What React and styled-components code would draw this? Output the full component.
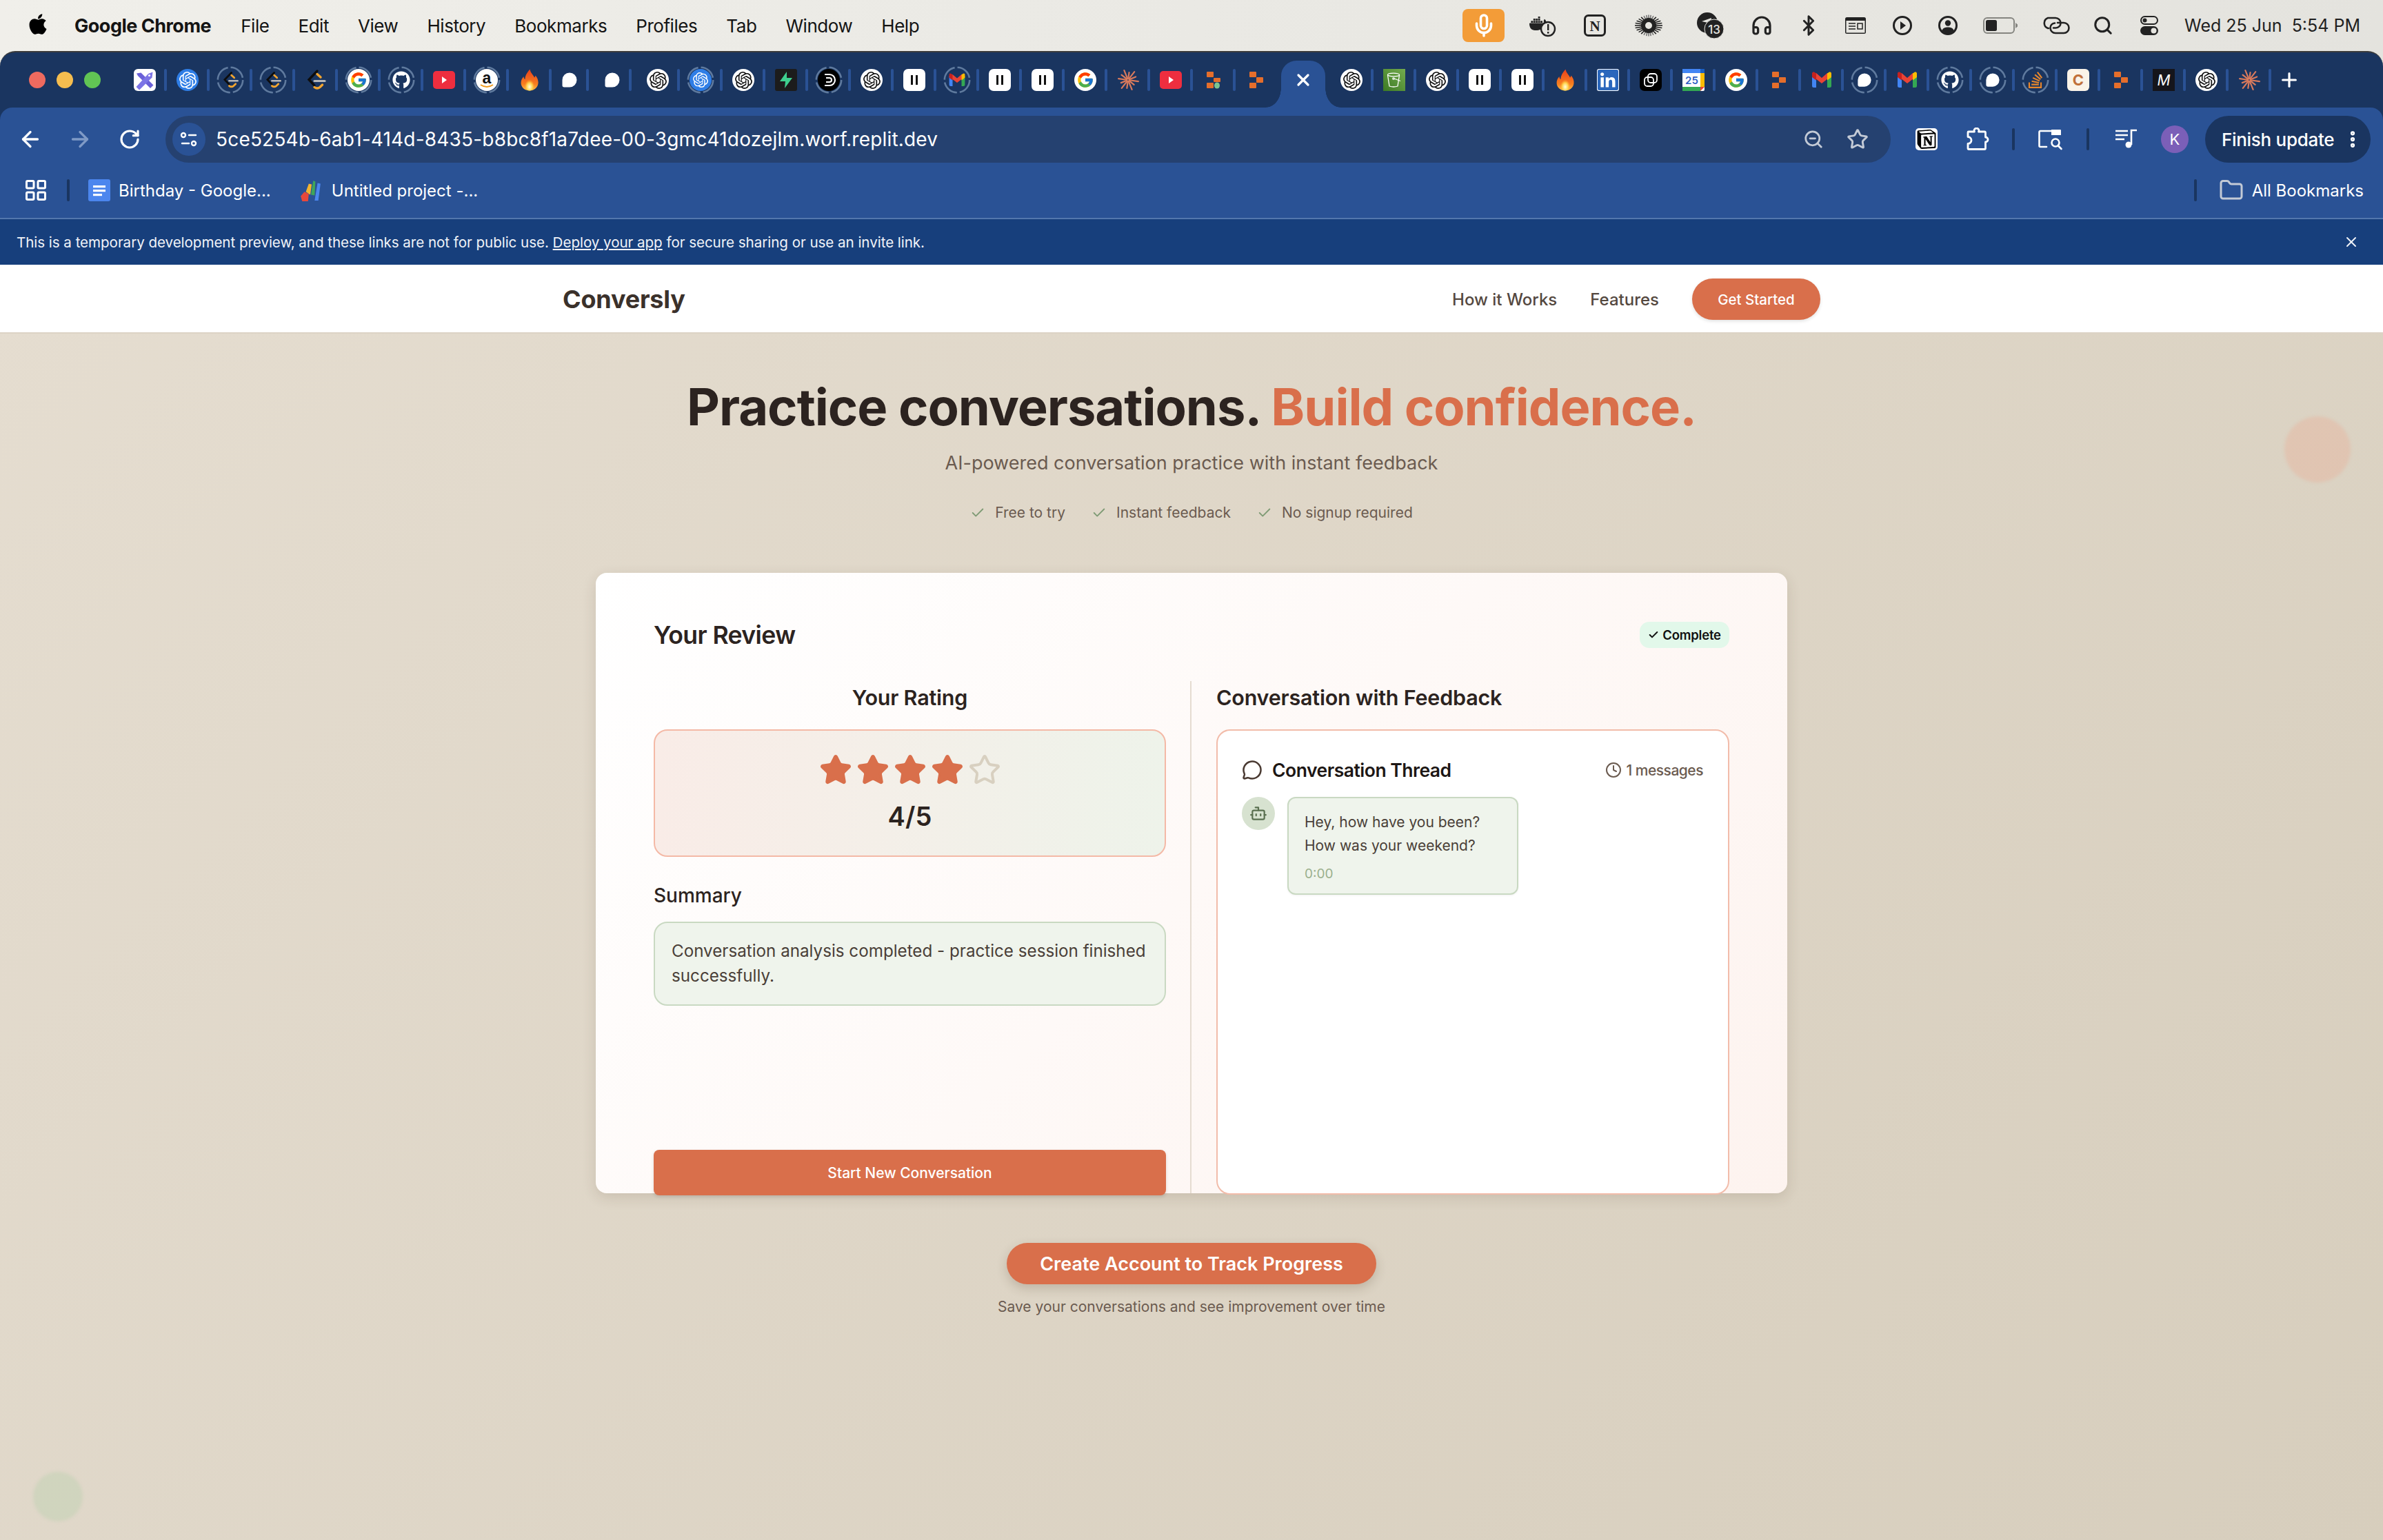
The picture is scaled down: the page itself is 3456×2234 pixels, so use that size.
import React from 'react';
import styled, { createGlobalStyle } from 'styled-components';
import { FaApple, FaGithub } from 'react-icons/fa';
import { FcGoogle } from 'react-icons/fc';
import { SiOpenai, SiLinkedin, SiStackoverflow, SiNotion, SiDocker } from 'react-icons/si';
import {
  ArrowLeft, ArrowRight, RotateCw, ZoomOut, Star, Folder, LayoutGrid, MessageCircle, Clock, Bot,
  Check, X, Plus, EllipsisVertical, Headphones, Bluetooth, Search, Mic,
} from 'lucide-react';

const Global = createGlobalStyle`
  html, body { margin: 0; padding: 0; height: 100%; background: #e9e8e3; }
  * { box-sizing: border-box; }
  body { font-family: Inter, "Liberation Sans", sans-serif; }
`;

const Screen = styled.div`
  width: 3456px; height: 2234px; display: flex; flex-direction: column; overflow: hidden;
  background: linear-gradient(90deg, #f0efea, #e4e3de);
`;

/* mac menu bar */
const MenuBar = styled.header`
  height: 74px; flex: none; display: flex; align-items: center; padding: 0 33px 0 38px; color: #141414;
`;
const AppleSlot = styled.span`display: flex; width: 70px; font-size: 34px; margin-top: -5px; color: #000;`;
const AppName = styled.span`font-size: 27px; font-weight: 700; letter-spacing: -0.5px; margin-right: 43px;`;
const MenuItem = styled.span`font-size: 26px; letter-spacing: -0.45px; margin-right: 42px;`;
const StatusGroup = styled.div`margin-left: auto; display: flex; align-items: center;`;
const StatusSlot = styled.span`
  width: ${p => p.$w}px; margin-left: ${p => p.$ml || 0}px; height: 48px; display: flex; align-items: center; justify-content: center; color: #222;
`;
const MicBox = styled.span`
  width: 61px; height: 48px; border-radius: 8px; background: #f39c38; color: #fff; display: flex; align-items: center; justify-content: center;
`;
const Clockline = styled.span`font-size: 25px; letter-spacing: 0; margin-left: 19px; color: #1f1f1f; white-space: pre;`;

/* browser window */
const Win = styled.div`
  flex: none; background: #1a3560; border-top: 2px solid #3c3c3c; border-radius: 22px 22px 0 0; overflow: hidden;
`;
const TabStrip = styled.div`height: 80px; display: flex; align-items: center; padding-left: 42px; position: relative;`;
const Lights = styled.div`display: flex; gap: 16px; width: 138px; flex: none;`;
const Light = styled.span`width: 24px; height: 24px; border-radius: 50%; background: ${p => p.$c};`;
const TabSlot = styled.div`
  flex: none; width: ${p => p.$last ? 58 : 62}px; height: 32px; display: flex; align-items: center; padding-left: 14px;
`;
const Fav = styled.span`
  width: 32px; height: 32px; flex: none; position: relative; display: flex; align-items: center; justify-content: center;
  border-radius: ${p => p.$r || 0}px; background: ${p => p.$bg || 'transparent'}; color: ${p => p.$c || '#fff'};
`;
const RingOverlay = styled.svg`position: absolute; left: -4px; top: -4px; width: 40px; height: 40px;`;
const TabSep = styled.span`width: 4px; height: 32px; border-radius: 2px; background: #2a5295; margin-left: 12px; flex: none;`;
const ActiveTab = styled.div`
  flex: none; align-self: flex-end; width: 64px; height: 68px; margin: 0 8px 0 8px; padding-bottom: 12px; background: #2a5295; color: #fff; border-radius: 22px 22px 0 0;
  display: flex; align-items: center; justify-content: center; position: relative;
  &::before, &::after { content: ''; position: absolute; bottom: 0; width: 22px; height: 28px; }
  &::before { left: -22px; background: radial-gradient(22px 28px at 0 0, transparent 98%, #2a5295 100%); }
  &::after { right: -22px; background: radial-gradient(22px 28px at 100% 0, transparent 98%, #2a5295 100%); }
`;
const NewTab = styled.span`margin-left: 10px; display: flex; color: #fff; width: 32px; justify-content: center;`;
const FavLetter = styled.span`
  font-size: ${p => p.$s}px; font-weight: ${p => p.$w || 700}; font-style: ${p => p.$i ? 'italic' : 'normal'}; color: ${p => p.$c}; line-height: 1;
`;

const Toolbar = styled.div`background: #2a5295; border-radius: 18px 18px 0 0;`;
const NavRow = styled.div`height: 80px; padding: 12px 18px 0 8px; display: flex; align-items: flex-start;`;
const ToolBtn = styled.span`
  width: 72px; height: 68px; flex: none; margin-left: ${p => p.$ml || 0}px; display: flex; align-items: center; justify-content: center;
  color: ${p => p.$c || '#fff'};
`;
const AddressPill = styled.div`
  flex: 1; height: 68px; margin-left: 16px; border-radius: 34px; background: #254170; display: flex; align-items: center; padding: 0 14px 0 10px; color: #fff;
`;
const SiteCtl = styled.span`width: 48px; height: 48px; border-radius: 50%; background: #2a5295; display: flex; align-items: center; justify-content: center; flex: none;`;
const UrlText = styled.span`font-size: 28px; margin-left: 15px; flex: 1; white-space: nowrap; letter-spacing: 0.19px;`;
const PillIcon = styled.span`width: 64px; display: flex; justify-content: center; color: #c3cad6; flex: none; margin-right: ${p => p.$mr || 0}px;`;
const VSep = styled.span`width: 4px; height: 32px; border-radius: 2px; background: #1a3560; flex: none; margin: 18px 0 0 ${p => p.$ml || 0}px;`;
const Avatar = styled.span`
  width: 40px; height: 40px; border-radius: 50%; background: #7b5fb8; color: #fff; font-size: 22px; display: flex; align-items: center; justify-content: center; margin: 14px 0 0 15px; flex: none;
`;
const FinishPill = styled.div`
  width: 240px; height: 68px; border-radius: 34px; background: #1a3560; color: #fff; margin-left: 24px; flex: none; display: flex; align-items: center; padding-left: 24px; font-size: 26px; font-weight: 500; gap: 12px; letter-spacing: -0.3px;
`;
const BookmarkRow = styled.div`height: 80px; display: flex; align-items: center; padding: 0 28px 0 34px; color: #fff; font-size: 24px;`;
const Bookmark = styled.span`display: flex; align-items: center; gap: ${p => p.$gap || 12}px; margin-left: ${p => p.$ml || 0}px;`;
const BookSep = styled.span`width: 4px; height: 32px; background: #1a3560; border-radius: 2px; margin-left: ${p => p.$auto ? 'auto' : `${p.$ml}px`};`;
const Rule = styled.div`height: 2px; background: #5377ad;`;
const Banner = styled.div`
  height: 66px; background: #173f7c; color: #f0f3f8; font-size: 20.6px; display: flex; align-items: center; justify-content: space-between; padding: 0 34px 0 24px; letter-spacing: -0.05px;
  a { color: inherit; text-decoration: underline; }
`;

/* page */
const Page = styled.div`
  flex: 1; position: relative; display: flex; flex-direction: column; overflow: hidden;
  background: linear-gradient(135deg, #e5ddd0, #d7cebd);
`;
const TopNav = styled.nav`
  height: 100px; flex: none; background: #fff; border-bottom: 2px solid #dcd3c5; display: flex; align-items: center; padding: 2px 816px 0; color: #2c2320;
`;
const Logo = styled.span`font-size: 36px; font-weight: 700; letter-spacing: -0.2px; margin-right: auto; color: #3b312b;`;
const NavLink = styled.span`font-size: 24px; font-weight: 500; color: #54483f; margin-right: 48px;`;
const CtaSmall = styled.span`
  width: 186px; height: 60px; border-radius: 30px; background: #d96f4b; color: #fff; font-size: 20.5px; font-weight: 500; display: flex; align-items: center; justify-content: center; box-shadow: 0 2px 5px rgba(0,0,0,.12);
`;
const Main = styled.main`display: flex; flex-direction: column; align-items: center; padding-top: 62px; color: #2c2320;`;
const Headline = styled.h1`
  margin: 0; font-size: 74px; line-height: 88px; font-weight: 700; letter-spacing: -1px; color: #2c2320;
  span { color: #d96f4b; }
`;
const Sub = styled.p`margin: 18px 0 0; font-size: 27px; line-height: 40px; color: #6b5b50;`;
const Perks = styled.ul`margin: 37px 0 0; padding: 0; list-style: none; display: flex; gap: 38px; font-size: 21px; line-height: 30px; color: #6b5b50;`;
const Perk = styled.li`display: flex; align-items: center; gap: 14px; svg { color: #7f9b75; }`;
const Card = styled.section`
  width: 1728px; height: 900px; margin-top: 72px; border-radius: 16px; padding: 66px 84px 0 84px; display: flex; flex-direction: column;
  background: linear-gradient(135deg, #ffffff 0%, #fdf3ef 100%); box-shadow: 0 6px 20px rgba(70,50,30,.14);
`;
const CardHead = styled.div`height: 48px; display: flex; align-items: center; justify-content: space-between;`;
const CardTitle = styled.h2`margin: 0; font-size: 35.6px; font-weight: 600; letter-spacing: -0.6px;`;
const DoneBadge = styled.span`
  width: 130px; height: 38px; border-radius: 14px; background: #e2f8ea; color: #111; font-size: 18.5px; font-weight: 600; display: flex; align-items: center; justify-content: center; gap: 5px; letter-spacing: -0.2px;
`;
const Columns = styled.div`flex: 1; margin-top: 43px; display: grid; grid-template-columns: 780px 1fr; min-height: 0;`;
const LeftCol = styled.div`display: flex; flex-direction: column; padding-right: 35px; border-right: 2px solid #e5dcd1;`;
const RightCol = styled.div`display: flex; flex-direction: column; padding-left: 36px;`;
const ColTitle = styled.h3`
  margin: 0; height: 48px; line-height: 48px; font-size: 30.5px; font-weight: 600; letter-spacing: -0.2px; text-align: ${p => p.$center ? 'center' : 'left'};
`;
const RatingBox = styled.div`
  margin-top: 22px; height: 185px; border-radius: 20px; border: 2px solid #f4b9a6; background: linear-gradient(90deg, #f9ece7, #eef3ea); display: flex; flex-direction: column; align-items: center; padding-top: 33px;
`;
const Stars = styled.div`display: flex; gap: 6px; height: 48px; svg { display: block; }`;
const Score = styled.div`margin-top: 20px; font-size: 38px; font-weight: 600; line-height: 46px; letter-spacing: 0.2px;`;
const SummaryLabel = styled.div`margin-top: 38px; font-size: 28px; font-weight: 500; line-height: 36px;`;
const SummaryBox = styled.div`
  margin-top: 20px; height: 122px; border-radius: 20px; border: 2px solid #c9d9c2; background: #eff4ec; padding: 23px 24px; font-size: 24.2px; line-height: 36px; color: #4a3f38;
`;
const BigAction = styled.div`
  margin-top: auto; margin-bottom: -3px; height: 66px; flex: none; border-radius: 8px; background: #d96f4b; color: #fff; font-size: 21px; font-weight: 500; display: flex; align-items: center; justify-content: center; box-shadow: 0 2px 5px rgba(0,0,0,.12); position: relative;
`;
const Thread = styled.div`
  margin-top: 22px; flex: 1; margin-bottom: -2px; background: #fff; border: 2px solid #f2bcaa; border-radius: 20px; padding: 38px 36px 0 35px;
`;
const ThreadHead = styled.div`height: 38px; display: flex; align-items: center; justify-content: space-between;`;
const ThreadTitle = styled.span`display: flex; align-items: center; gap: 14px; font-size: 26.5px; font-weight: 600; color: #1d1715; letter-spacing: -0.5px; svg { color: #4a3a32; }`;
const ThreadMeta = styled.span`display: flex; align-items: center; gap: 6px; font-size: 21px; font-weight: 500; color: #6b5b50; letter-spacing: -0.5px;`;
const Message = styled.div`margin-top: 20px; display: flex; gap: 18px; align-items: flex-start;`;
const BotAvatar = styled.span`width: 48px; height: 48px; border-radius: 50%; background: #d7e2d0; color: #5a7050; display: flex; align-items: center; justify-content: center; flex: none;`;
const Bubble = styled.div`
  width: 335px; height: 142px; background: #eff4ec; border: 2px solid #c9d9c2; border-radius: 12px; padding: 18px 22px 0 23px; font-size: 21px; line-height: 34px; color: #4a3f38; box-shadow: 0 1px 3px rgba(0,0,0,.06);
`;
const BubbleTime = styled.div`margin-top: 11px; font-size: 19px; line-height: 26px; color: #9bb08e;`;
const CtaBig = styled.div`
  margin-top: 72px; width: 536px; height: 60px; border-radius: 30px; background: #d96f4b; color: #fff; font-size: 27px; font-weight: 600; display: flex; align-items: center; justify-content: center; box-shadow: 0 6px 16px rgba(70,50,30,.2);
`;
const CtaNote = styled.p`margin: 18px 0 0; font-size: 21px; line-height: 30px; color: #6b5b50;`;
const Blob = styled.span`
  position: absolute; border-radius: 50%; width: ${p => p.$d}px; height: ${p => p.$d}px; background: ${p => p.$bg}; filter: blur(2px);
`;
const BlobTR = styled(Blob)`right: 47px; top: 220px;`;
const BlobBL = styled(Blob)`left: 48px; bottom: 27px;`;

/* ---------- favicon drawings ---------- */
const S = p => <svg width="32" height="32" viewBox="0 0 32 32" {...p} />;
const Ring = () => (
  <RingOverlay viewBox="0 0 40 40"><circle cx="20" cy="20" r="18.2" fill="none" stroke="#5f7a9e" strokeWidth="2.6" strokeDasharray="24.5 4.1" /></RingOverlay>
);
const Blocks = ({ dot }) => (
  <S>
    <rect x="6" y="4" width="10" height="8" rx="1" fill="#e56e2b" />
    <rect x="16" y={dot ? 13 : 12} width="10" height={dot ? 6 : 8} rx="1" fill="#e56e2b" />
    <rect x="6" y="20" width="10" height="8" rx="1" fill="#e56e2b" />
    {dot && <ellipse cx="21" cy="24" rx="4" ry="4.6" fill="#7cc48f" />}
  </S>
);
const Flame = () => (
  <S>
    <defs>
      <linearGradient id="fl" x1="0" y1="0" x2="0" y2="1"><stop offset="0" stopColor="#e8401c" /><stop offset=".7" stopColor="#f77f1f" /><stop offset="1" stopColor="#ffc04a" /></linearGradient>
      <radialGradient id="fi" cx=".5" cy=".72" r=".55"><stop offset="0" stopColor="#fffde0" /><stop offset=".55" stopColor="#ffd34d" /><stop offset="1" stopColor="#ff9a2a" stopOpacity="0" /></radialGradient>
    </defs>
    <path d="M16.5 0.5C17.5 6 21.5 8.5 23 12.5C24 11.5 24.5 10.5 24.5 9.5C27.5 13 29 17 28.5 21C27.8 27 22.5 31.5 16 31.5C9.5 31.5 4 27 3.6 21C3.3 17 5 13.5 7.5 11C7.5 13 8.3 14.5 9.5 15C9.3 10 12.5 5 16.5 .5Z" fill="url(#fl)" />
    <path d="M16 12C17 16 23 19 23 24.5C23 28.5 20 31.5 16 31.5C12 31.5 9 28.5 9 24.5C9 19 14.5 17 16 12Z" fill="url(#fi)" />
  </S>
);
const Burst = ({ size = 32, color = '#d97a5c', w = 2.2 }) => (
  <svg width={size} height={size} viewBox="0 0 32 32">
    {[15, 11, 15, 12, 15, 11, 14, 12, 15, 11, 15, 12].map((l, i) => {
      const a = (i * 30 + 8) * Math.PI / 180;
      return <line key={i} x1={16 + 2 * Math.cos(a)} y1={16 + 2 * Math.sin(a)} x2={16 + l * Math.cos(a)} y2={16 + l * Math.sin(a)} stroke={color} strokeWidth={w} strokeLinecap="round" />;
    })}
  </svg>
);
const Gmail = ({ size = 32 }) => (
  <svg width={size} height={size} viewBox="0 0 32 32">
    <path d="M2 10a3 3 0 0 1 3-3h3v20H4.5A2.5 2.5 0 0 1 2 24.5Z" fill="#4285f4" />
    <path d="M30 10a3 3 0 0 0-3-3h-3v20h3.5a2.5 2.5 0 0 0 2.5-2.5Z" fill="#34a853" />
    <path d="M2 10l14 11 14-11v-1l-6-3-8 7-8-7-6 3Z" fill="#ea4335" />
    <path d="M24 6.5l2.5-1.7A2.2 2.2 0 0 1 30 7v5l-6 4.5Z" fill="#fbbc04" />
    <path d="M8 6.5L5.5 4.8A2.2 2.2 0 0 0 2 7v5l6 4.5Z" fill="#c5221f" />
  </svg>
);
const Leet = ({ small }) => (
  <svg width={small ? 26 : 32} height={small ? 26 : 32} viewBox="0 0 32 32" fill="none" strokeLinecap="round">
    <path d="M18 3L6 15.5L14 24" stroke="#0d0d0d" strokeWidth="3.4" />
    <path d="M18 7.5L23 12" stroke="#f3a52f" strokeWidth="3.4" />
    <path d="M14 26.5q4 3 8 0l3.5-3.5" stroke="#f3a52f" strokeWidth="3.4" />
    <path d="M14 17.5H29" stroke="#b7b7b7" strokeWidth="3.2" />
  </svg>
);
const Kit = () => (
  <S>
    <path d="M4 6.5l6.5-1 18 18-4.5 4.5-18-18Z" fill="#6a60d8" />
    <path d="M27.5 4.5l-1 8L8 30.5l-4.5-4.5L21 7Z" fill="#7c74e6" />
    <circle cx="22.5" cy="9.5" r="1.6" fill="#fff" />
  </S>
);
const Chat = ({ size = 24 }) => (
  <svg width={size} height={size} viewBox="0 0 24 24"><path d="M12 1.5a10.5 10.5 0 0 1 0 21H4.2A2.7 2.7 0 0 1 1.5 19.8V12A10.5 10.5 0 0 1 12 1.5Z" fill="#fff" /></svg>
);
const YouTube = () => (
  <S><rect x="0" y="3" width="32" height="26" rx="5" fill="#ee2e3f" /><path d="M13 11l7 5-7 5Z" fill="#fff" /></S>
);
const Pause = () => (
  <Fav $bg="#fff" $r={7}>
    <S><rect x="11" y="9" width="3" height="14" fill="#111" /><rect x="18" y="9" width="3" height="14" fill="#111" /></S>
  </Fav>
);
const GptWhite = () => <Fav $bg="#fff" $r={16} $c="#111"><SiOpenai size={25} /></Fav>;
const GoogleFav = () => <Fav $bg="#fff" $r={16}><FcGoogle size={26} /></Fav>;
const GoogleRing = () => <Fav><Fav $bg="#fff" $r={16}><FcGoogle size={26} /></Fav><Ring /></Fav>;
const Bucket = () => (
  <Fav $bg="linear-gradient(45deg,#3c7a24,#74ab4e)">
    <S fill="none" stroke="#fff" strokeWidth="1.3"><ellipse cx="15" cy="8.5" rx="8.5" ry="2.3" /><path d="M6.5 9l2.5 16q6 2 12 0l2.5-16" /><circle cx="15" cy="14" r="1.2" /><path d="M16 14l9 3.5" /></S>
  </Fav>
);
const CopyBlack = () => (
  <Fav $bg="#000" $r={7}>
    <S fill="none" stroke="#fff" strokeWidth="1.8"><rect x="12" y="7" width="13" height="13" rx="4" /><rect x="7" y="12" width="13" height="13" rx="4" /></S>
  </Fav>
);
const Cal = () => (
  <Fav>
    <S>
      <rect width="32" height="32" rx="2" fill="#fff" />
      <rect width="26" height="6" fill="#4285f4" /><rect x="26" width="6" height="6" fill="#1a5fc4" />
      <rect x="26" y="6" width="6" height="20" fill="#fbbc04" />
      <rect y="26" width="26" height="6" fill="#34a853" /><path d="M26 26h6l-6 6Z" fill="#ea4335" />
      <text x="13.5" y="22" fontSize="15" fontWeight="600" textAnchor="middle" fill="#2d5fc4" fontFamily="Inter">25</text>
    </S>
  </Fav>
);
const Supa = () => (
  <Fav $bg="#1c1c1c" $r={3}><S><path d="M17 4L7 18h8l-1 10 11-15h-8Z" fill="#3ecf8e" /></S></Fav>
);
const DLogo = () => (
  <Fav $bg="#000" $r={16}>
    <S fill="none" stroke="#fff" strokeWidth="2.2"><path d="M10 8h7a8 8 0 0 1 0 16h-7" /><path d="M12 13h5a3 3 0 0 1 0 6h-5" /></S><Ring />
  </Fav>
);
const Amazon = () => (
  <Fav>
    <Fav $bg="#fff" $r={16}>
      <svg width="32" height="32" viewBox="0 0 32 32">
        <text x="16" y="21" fontSize="23" fontWeight="700" fill="#111" textAnchor="middle" fontFamily="Liberation Sans">a</text>
        <path d="M7 23q9 6 18 0" stroke="#f19a1a" strokeWidth="2" fill="none" />
      </svg>
    </Fav>
    <Ring />
  </Fav>
);
const KitFav = () => <Fav $bg="#fff" $r={6}><Kit /></Fav>;
const GptBlue = ({ ring }) => (
  <Fav>
    <Fav $bg="#2f7ee6" $r={16}><SiOpenai size={ring ? 22 : 25} color="#fff" /></Fav>
    {ring && <Ring />}
  </Fav>
);
const Ringed = ({ children }) => <Fav>{children}<Ring /></Fav>;

const tabsBefore = [
  <KitFav />, <GptBlue />, <Ringed><Leet small /></Ringed>, <Ringed><Leet small /></Ringed>, <Leet />, <GoogleRing />,
  <Ringed><FaGithub size={26} color="#fff" /></Ringed>, <YouTube />, <Amazon />, <Flame />, <Chat />, <Chat />, <GptWhite />,
  <GptBlue ring />, <GptWhite />, <Supa />, <DLogo />, <GptWhite />, <Pause />, <Ringed><Gmail size={26} /></Ringed>,
  <Pause />, <Pause />, <GoogleFav />, <Burst />, <YouTube />, <Blocks dot />, <Blocks />,
];
const tabsAfter = [
  <GptWhite />, <Bucket />, <GptWhite />, <Pause />, <Pause />, <Flame />, <Fav $bg="#fff" $r={3} $c="#2a66bc"><SiLinkedin size={30} /></Fav>,
  <CopyBlack />, <Cal />, <GoogleFav />, <Blocks />, <Gmail />, <Ringed><Chat size={22} /></Ringed>, <Gmail />,
  <Ringed><FaGithub size={26} color="#fff" /></Ringed>, <Ringed><Chat size={22} /></Ringed>, <Ringed><SiStackoverflow size={24} color="#e8862b" /></Ringed>,
  <Fav $bg="#faf3e8" $r={6}><FavLetter $s={22} $c="#c0703a">C</FavLetter></Fav>, <Blocks />,
  <Fav $bg="#15151b"><FavLetter $s={21} $w={400} $i $c="#fff">M</FavLetter></Fav>, <GptWhite />, <Burst />,
];

/* ---------- status icons ---------- */
const Ic = p => <svg fill="none" stroke="#222" strokeWidth="3" {...p} />;
const DockerAlert = () => (
  <svg width="40" height="34" viewBox="0 0 40 34">
    <foreignObject x="0" y="0" width="28" height="28"><SiDocker size={28} color="#222" /></foreignObject>
    <circle cx="27" cy="22" r="10" fill="#e6e5e0" stroke="#222" strokeWidth="2.4" />
    <rect x="26" y="15" width="2.4" height="9" fill="#222" /><rect x="26" y="26" width="2.4" height="2.6" fill="#222" />
  </svg>
);
const NotionMark = () => (
  <svg width="32" height="32" viewBox="0 0 32 32">
    <rect x="1.5" y="1.5" width="29" height="29" rx="5" fill="none" stroke="#222" strokeWidth="3" />
    <text x="16" y="24" fontSize="21" fontWeight="700" textAnchor="middle" fontFamily="Liberation Serif" fill="#222">N</text>
  </svg>
);
const Sun = () => (
  <svg width="40" height="32" viewBox="0 0 40 32">
    {Array.from({ length: 28 }).map((_, i) => {
      const a = i * (360 / 28) * Math.PI / 180;
      const h = Math.abs(Math.cos(a));
      return <line key={i} x1={20 + 9 * Math.cos(a)} y1={16 + 9 * Math.sin(a)} x2={20 + (13 + 7 * h) * Math.cos(a)} y2={16 + 15.5 * Math.sin(a)} stroke={h > .5 ? '#222' : '#777'} strokeWidth="1.6" />;
    })}
    <circle cx="20" cy="16" r="8" fill="none" stroke="#222" strokeWidth="6" />
  </svg>
);
const Badge13 = () => (
  <svg width="42" height="38" viewBox="0 0 42 38">
    <circle cx="16" cy="15" r="15" fill="#222" /><path d="M8 13l14-5-2 10-3-3Z" fill="#e6e5e0" />
    <circle cx="26" cy="24" r="14" fill="#222" stroke="#e6e5e0" strokeWidth="1" />
    <text x="26" y="30.5" fontSize="17" fontFamily="Inter" fontWeight="500" fill="#e6e5e0" textAnchor="middle">13</text>
  </svg>
);
const KeyWin = () => (
  <svg width="30" height="24" viewBox="0 0 30 24">
    <rect width="30" height="24" rx="2.5" fill="#222" /><rect x="1.5" y="5" width="27" height="17.5" fill="#e6e5e0" />
    <path d="M5 9h10M5 13h10M5 17h10" stroke="#222" strokeWidth="1.5" />
    <rect x="18" y="9" width="7" height="8" fill="none" stroke="#222" strokeWidth="1.5" />
  </svg>
);
const PlayRing = () => (
  <Ic width="28" height="28" viewBox="0 0 28 28"><circle cx="14" cy="14" r="12.5" /><path d="M11 8l8 6-8 6Z" fill="#222" stroke="none" /></Ic>
);
const UserRing = () => (
  <Ic width="28" height="28" viewBox="0 0 28 28">
    <circle cx="14" cy="14" r="12.5" /><circle cx="14" cy="10.5" r="4.2" fill="#222" stroke="none" />
    <path d="M5 22c2-5 5-5.5 9-5.5s7 .5 9 5.5q-9 7-18 0Z" fill="#222" stroke="none" />
  </Ic>
);
const Battery = () => (
  <svg width="50" height="24" viewBox="0 0 50 24">
    <rect x="1" y="1" width="44" height="22" rx="5" fill="none" stroke="#858580" strokeWidth="2" />
    <rect x="4" y="4" width="16" height="16" rx="2.5" fill="#222" />
    <path d="M47 8l3 2.5v3l-3 2.5Z" fill="#858580" />
  </svg>
);
const LinkMark = () => (
  <Ic width="42" height="26" viewBox="0 0 42 26" strokeWidth="2.6" strokeLinecap="round">
    <path d="M11 17h-1a8 8 0 0 1 0-15h11a7.5 7.5 0 0 1 7.5 7.5 7 7 0 0 1-7 7H18" />
    <path d="M24 9h9a7.5 7.5 0 0 1 0 15H21a7.5 7.5 0 0 1-7.5-7.5A7 7 0 0 1 20 9.5" />
  </Ic>
);
const Toggles = () => (
  <svg width="26" height="28" viewBox="0 0 26 28">
    <rect x="1" y="1" width="24" height="11" rx="5.5" fill="none" stroke="#222" strokeWidth="2" /><circle cx="6.5" cy="6.5" r="3" fill="#222" />
    <rect x="0" y="15" width="26" height="13" rx="6.5" fill="#222" /><circle cx="19.5" cy="21.5" r="4" fill="#e6e5e0" />
  </svg>
);
const statusItems = [
  { w: 72, ml: 20, el: <DockerAlert /> }, { w: 72, ml: 3, el: <NotionMark /> }, { w: 72, ml: 6, el: <Sun /> },
  { w: 72, ml: 18, el: <Badge13 /> }, { w: 72, ml: 2, el: <Headphones size={32} strokeWidth={2.4} /> },
  { w: 60, ml: 2, el: <Bluetooth size={32} strokeWidth={2.2} /> }, { w: 72, ml: 2, el: <KeyWin /> }, { w: 64, el: <PlayRing /> },
  { w: 64, ml: 2, el: <UserRing /> }, { w: 68, ml: 10, el: <Battery /> }, { w: 72, ml: 10, el: <LinkMark /> },
  { w: 64, ml: 1, el: <Search size={30} strokeWidth={2.4} /> }, { w: 64, ml: 3, el: <Toggles /> },
];

/* ---------- toolbar icons ---------- */
const TuneIcon = () => (
  <svg width="26" height="24" viewBox="0 0 26 24" fill="none" stroke="#fff" strokeWidth="2.4" strokeLinecap="round">
    <circle cx="5" cy="6" r="3" /><path d="M13 6h10" /><circle cx="20" cy="18" r="3" /><path d="M3 18h10" />
  </svg>
);
const TabSearch = () => (
  <svg width="36" height="36" viewBox="0 0 36 36" fill="none" stroke="#fff" strokeWidth="2.6" strokeLinecap="round">
    <path d="M12 29H3a1.5 1.5 0 0 1-1.5-1.5v-20A1.5 1.5 0 0 1 3 6h18" />
    <path d="M19 4h13a1 1 0 0 1 1 1v7H19Z" fill="#fff" stroke="none" />
    <circle cx="25" cy="23" r="5.5" /><path d="M29 27.5l4.5 4.5" />
  </svg>
);
const MusicQueue = () => (
  <svg width="32" height="32" viewBox="0 0 32 32" fill="none" stroke="#fff" strokeWidth="2.6">
    <path d="M1 4h18M1 10h18M1 16h13" /><path d="M24 24V3h8" /><circle cx="20" cy="24" r="4.5" fill="#fff" stroke="none" />
  </svg>
);
const PuzzleMark = () => (
  <svg width="34" height="34" viewBox="0 0 34 34" fill="none" stroke="#fff" strokeWidth="2.8" strokeLinejoin="round">
    <path d="M4 6h8.5a2.6 2.6 0 0 1 -0.5-1.5 3.5 3.5 0 0 1 7 0 2.6 2.6 0 0 1-.5 1.5H27a1.5 1.5 0 0 1 1.5 1.5V14a3.5 3.5 0 0 1 0 7v9a1.5 1.5 0 0 1-1.5 1.5H4.5A1.5 1.5 0 0 1 3 30v-6.5a5 5 0 0 0 0-10V7a1 1 0 0 1 1-1Z" />
  </svg>
);
const NotionExt = () => (
  <Fav $bg="#fff" $r={5} $c="#000"><SiNotion size={28} /></Fav>
);
const DocsIcon = () => (
  <Fav $bg="#4c86ee" $r={3}>
    <S><rect x="7" y="9" width="18" height="3.2" fill="#fff" /><rect x="7" y="15" width="18" height="3.2" fill="#fff" /><rect x="7" y="21" width="13" height="3.2" fill="#fff" /></S>
  </Fav>
);
const StudioIcon = () => (
  <svg width="32" height="34" viewBox="0 0 30 32">
    <path d="M1 24l5-6 6 3-1 10H3Z" fill="#e8483b" /><path d="M8 18L12 7l4 1-2 14Z" fill="#f4b42f" />
    <path d="M15 22L18 3l3 1-1 19Z" fill="#3fa65a" /><path d="M20 30l4-24 4 1-3 23Z" fill="#4c86ee" />
  </svg>
);
const RatingStar = ({ filled }) => (
  <Star size={48} fill={filled ? '#d96f4b' : 'none'} color={filled ? '#d96f4b' : '#d8d0c0'} strokeWidth={2} />
);

export default function App() {
  return (
    <Screen>
      <Global />
      <MenuBar>
        <AppleSlot><FaApple /></AppleSlot>
        <AppName>Google Chrome</AppName>
        {['File', 'Edit', 'View', 'History', 'Bookmarks', 'Profiles', 'Tab', 'Window', 'Help'].map(m => <MenuItem key={m}>{m}</MenuItem>)}
        <StatusGroup>
          <MicBox><Mic size={36} strokeWidth={2.4} /></MicBox>
          {statusItems.map((s, i) => <StatusSlot key={i} $w={s.w} $ml={s.ml}>{s.el}</StatusSlot>)}
          <Clockline>Wed 25 Jun  5:54 PM</Clockline>
        </StatusGroup>
      </MenuBar>

      <Win>
        <TabStrip>
          <Lights><Light $c="#ee6a5f" /><Light $c="#f5bd4f" /><Light $c="#61c454" /></Lights>
          {tabsBefore.map((t, i) => {
            const last = i === tabsBefore.length - 1;
            return <TabSlot key={i} $last={last}>{t}{!last && <TabSep />}</TabSlot>;
          })}
          <ActiveTab><X size={28} strokeWidth={2.8} /></ActiveTab>
          {tabsAfter.map((t, i) => (
            <TabSlot key={i}>{t}<TabSep /></TabSlot>
          ))}
          <NewTab><Plus size={34} strokeWidth={2.4} /></NewTab>
        </TabStrip>
        <Toolbar>
          <NavRow>
            <ToolBtn><ArrowLeft size={36} strokeWidth={2.2} /></ToolBtn>
            <ToolBtn $c="#7f9ac6"><ArrowRight size={36} strokeWidth={2.2} /></ToolBtn>
            <ToolBtn><RotateCw size={32} strokeWidth={2.4} /></ToolBtn>
            <AddressPill>
              <SiteCtl><TuneIcon /></SiteCtl>
              <UrlText>5ce5254b-6ab1-414d-8435-b8bc8f1a7dee-00-3gmc41dozejlm.worf.replit.dev</UrlText>
              <PillIcon><ZoomOut size={30} strokeWidth={2.2} /></PillIcon>
              <PillIcon $mr={2}><Star size={32} strokeWidth={2.2} /></PillIcon>
            </AddressPill>
            <ToolBtn $ml={16}><NotionExt /></ToolBtn>
            <ToolBtn $ml={2}><PuzzleMark /></ToolBtn>
            <VSep $ml={14} />
            <ToolBtn $ml={16}><TabSearch /></ToolBtn>
            <VSep $ml={16} />
            <ToolBtn $ml={17}><MusicQueue /></ToolBtn>
            <Avatar>K</Avatar>
            <FinishPill>Finish update<EllipsisVertical size={30} strokeWidth={3} /></FinishPill>
          </NavRow>
          <BookmarkRow>
            <LayoutGrid size={36} strokeWidth={2} />
            <BookSep $ml={27} />
            <Bookmark $ml={27}><DocsIcon />Birthday - Google...</Bookmark>
            <Bookmark $ml={42} $gap={14}><StudioIcon />Untitled project -...</Bookmark>
            <BookSep $auto />
            <Bookmark $ml={32}><Folder size={36} strokeWidth={2} color="#c3cad6" />All Bookmarks</Bookmark>
          </BookmarkRow>
        </Toolbar>
        <Rule />
        <Banner>
          <span>This is a temporary development preview, and these links are not for public use. <a>Deploy your app</a> for secure sharing or use an invite link.</span>
          <X size={24} strokeWidth={2} />
        </Banner>
      </Win>

      <Page>
        <TopNav>
          <Logo>Conversly</Logo>
          <NavLink>How it Works</NavLink>
          <NavLink>Features</NavLink>
          <CtaSmall>Get Started</CtaSmall>
        </TopNav>
        <Main>
          <Headline>Practice conversations. <span>Build confidence.</span></Headline>
          <Sub>AI-powered conversation practice with instant feedback</Sub>
          <Perks>
            <Perk><Check size={22} strokeWidth={2} />Free to try</Perk>
            <Perk><Check size={22} strokeWidth={2} />Instant feedback</Perk>
            <Perk><Check size={22} strokeWidth={2} />No signup required</Perk>
          </Perks>
          <Card>
            <CardHead>
              <CardTitle>Your Review</CardTitle>
              <DoneBadge><Check size={16} strokeWidth={3} />Complete</DoneBadge>
            </CardHead>
            <Columns>
              <LeftCol>
                <ColTitle $center>Your Rating</ColTitle>
                <RatingBox>
                  <Stars>{[1, 2, 3, 4, 5].map(n => <RatingStar key={n} filled={n <= 4} />)}</Stars>
                  <Score>4/5</Score>
                </RatingBox>
                <SummaryLabel>Summary</SummaryLabel>
                <SummaryBox>Conversation analysis completed - practice session finished successfully.</SummaryBox>
                <BigAction>Start New Conversation</BigAction>
              </LeftCol>
              <RightCol>
                <ColTitle>Conversation with Feedback</ColTitle>
                <Thread>
                  <ThreadHead>
                    <ThreadTitle><MessageCircle size={30} strokeWidth={2} />Conversation Thread</ThreadTitle>
                    <ThreadMeta><Clock size={24} strokeWidth={2} />1 messages</ThreadMeta>
                  </ThreadHead>
                  <Message>
                    <BotAvatar><Bot size={26} strokeWidth={2} /></BotAvatar>
                    <Bubble>
                      Hey, how have you been? How was your weekend?
                      <BubbleTime>0:00</BubbleTime>
                    </Bubble>
                  </Message>
                </Thread>
              </RightCol>
            </Columns>
          </Card>
          <CtaBig>Create Account to Track Progress</CtaBig>
          <CtaNote>Save your conversations and see improvement over time</CtaNote>
        </Main>
        <BlobTR $d={96} $bg="rgba(240,160,130,.26)" />
        <BlobBL $d={72} $bg="rgba(170,205,160,.28)" />
      </Page>
    </Screen>
  );
}
